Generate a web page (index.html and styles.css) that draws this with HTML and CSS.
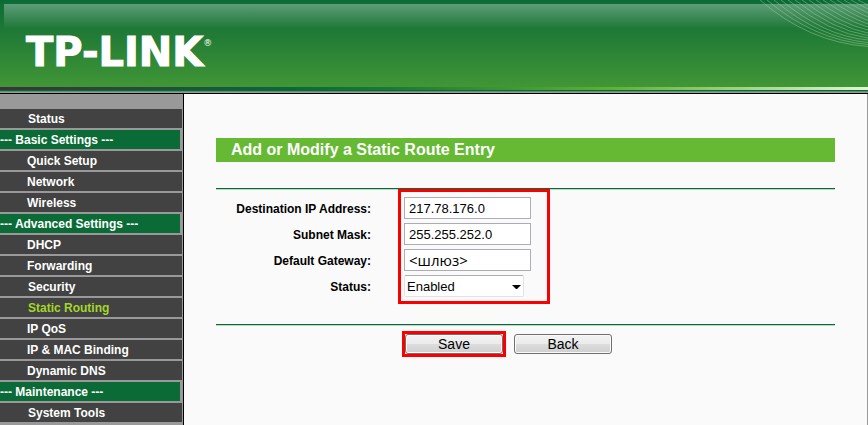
FILE: index.html
```html
<!DOCTYPE html>
<html lang="en">
<head>
<meta charset="utf-8">
<title>TP-LINK - Static Routing</title>
<link rel="stylesheet" href="styles.css">
</head>
<body>
<header class="banner">
  <svg class="waves" width="112" height="48" viewBox="0 0 112 48" aria-hidden="true">
    <path d="M4 0Q52 42 112 46.500"/>
    <path d="M11 0Q58 40 112 44.500"/>
    <path d="M18 0Q63 38 112 42.500"/>
    <path d="M25 0Q68 36 112 40"/>
    <path d="M32 0Q73 33 112 38"/>
    <path d="M39 0Q77 30 112 35.500"/>
    <path d="M46 0Q81 27 112 33"/>
    <path d="M53 0Q85 24 112 30"/>
    <path d="M60 0Q88 20 112 27"/>
    <path d="M67 0Q92 17 112 24"/>
    <path d="M74 0Q95 14 112 20.500"/>
    <path d="M81 0Q98 11 112 17"/>
    <path d="M88 0Q101 8 112 13"/>
    <path d="M95 0Q104 5 112 9"/>
    <path d="M102 0Q108 3 112 5"/>
  </svg>
  <div class="logo">TP-LINK<sup>®</sup></div>
</header>
<div class="strip"></div>
<div class="page">
  <nav class="menu">
    <a class="item inset" href="#">Status</a>
    <a class="item section" href="#">--- Basic Settings ---</a>
    <a class="item" href="#">Quick Setup</a>
    <a class="item" href="#">Network</a>
    <a class="item" href="#">Wireless</a>
    <a class="item section" href="#">--- Advanced Settings ---</a>
    <a class="item" href="#">DHCP</a>
    <a class="item" href="#">Forwarding</a>
    <a class="item inset" href="#">Security</a>
    <a class="item inset active" href="#">Static Routing</a>
    <a class="item" href="#">IP QoS</a>
    <a class="item" href="#">IP &amp; MAC Binding</a>
    <a class="item" href="#">Dynamic DNS</a>
    <a class="item section" href="#">--- Maintenance ---</a>
    <a class="item inset" href="#">System Tools</a>
  </nav>
  <main class="content">
    <h1 class="title">Add or Modify a Static Route Entry</h1>
    <form>
      <div class="fields">
        <label for="dest">Destination IP Address:</label>
        <input class="box" id="dest" type="text" value="217.78.176.0">
        <label for="mask">Subnet Mask:</label>
        <input class="box" id="mask" type="text" value="255.255.252.0">
        <label for="gateway">Default Gateway:</label>
        <input class="box gateway" id="gateway" type="text" value="&lt;шлюз&gt;">
        <label for="status">Status:</label>
        <div class="picker">
          <select id="status"><option>Enabled</option><option>Disabled</option></select>
          <svg width="9" height="4" viewBox="0 0 9 4" aria-hidden="true"><path d="M0 0H9L5 4H4Z"/></svg>
        </div>
        <div class="highlight"></div>
      </div>
      <div class="actions">
        <div class="marked"><button type="button">Save</button></div>
        <button type="button">Back</button>
      </div>
    </form>
  </main>
</div>
</body>
</html>
```
FILE: styles.css
```css
* {
  box-sizing: border-box;
}

body {
  margin: 0;
  min-height: 100vh;
  display: flex;
  flex-direction: column;
  overflow: hidden;
  background: #fafafa;
  color: #000;
  font-family: "Liberation Sans", Arial, sans-serif;
  font-size: 12px;
}

.banner {
  position: relative;
  height: 87px;
  padding: 30px 0 0 26px;
  background: linear-gradient(#0b6b36 0, #0f6d36 4px, #1e7836 29px, #419636 87px);
}

.banner::before {
  content: "";
  position: absolute;
  inset: 4px 0 auto 4px;
  height: 25px;
  background: linear-gradient(rgba(255, 255, 255, 0.33), rgba(255, 255, 255, 0));
}

.waves {
  position: absolute;
  top: 0;
  right: 0;
  fill: none;
  stroke: #b5dcb5;
  stroke-opacity: 0.4;
  stroke-width: 1;
}

.logo {
  position: relative;
  display: flex;
  color: #fff;
  font-family: "DejaVu Sans", sans-serif;
  font-size: 40px;
  font-weight: bold;
  line-height: 44px;
  -webkit-text-stroke: 1px #fff;
}

.logo sup {
  padding-top: 7px;
  font-size: 9px;
  font-weight: normal;
  line-height: 12px;
  -webkit-text-stroke: 0;
}

.strip {
  height: 7px;
  border-bottom: 1px solid #000;
  background:
    linear-gradient(#0b6b36 0 1px, #5c8f73 1px 2px, #999 2px) 0 3px / 100% 3px no-repeat,
    linear-gradient(90deg, #3a3438 0, #0d6638 33%, #1c7836 45%, #5cb130 70%, #e0f5d4 100%);
}

.page {
  flex: 1;
  display: grid;
  grid-template-columns: 184px 1fr;
}

.menu {
  display: flex;
  flex-direction: column;
  gap: 2px;
  padding: 15px 1px 1px 0;
  border-right: 1px solid #000;
  background: #999;
}

.item {
  padding: 2px 0 0 27px;
  background: #424242;
  color: #fff;
  font-weight: bold;
  line-height: 17px;
  text-decoration: none;
}

.inset {
  padding-left: 28px;
}

.section {
  margin-right: 2px;
  padding-left: 0;
  background: #0b6b36;
}

.active {
  color: #a2d729;
}

.content {
  padding: 44px 32px 0;
  border-right: 1px solid #999;
}

.title {
  margin: 0 0 26px;
  padding-left: 15px;
  background: #66b933;
  color: #fff;
  font-size: 16px;
  line-height: 24px;
}

.fields {
  position: relative;
  display: grid;
  grid-template-columns: 155px 1fr;
  grid-auto-rows: 22px;
  gap: 4px 33px;
  align-items: center;
  padding: 8px 0 27px;
  border-top: 1px solid #0b6b36;
  box-shadow: inset 0 1px #b9d6c6;
}

.fields label {
  padding-top: 2px;
  font-weight: bold;
  line-height: 22px;
  text-align: right;
}

.box,
.picker select {
  height: 22px;
  margin: 0;
  border: 1px solid #abadb3;
  background: #fff;
  color: #000;
  font-family: inherit;
  font-size: 13px;
}

.box {
  width: 127px;
  padding: 1px 4px 0;
}

.gateway {
  padding: 0 4px 1px;
  font-family: "Open Sans", "Noto Sans", sans-serif;
  font-size: 15px;
}

.picker {
  position: relative;
  width: 120px;
}

.picker select {
  display: block;
  width: 100%;
  padding: 0 2px;
  border-color: #abadb3 #e2e3ea #e2e3ea;
  border-radius: 2px;
  appearance: none;
}

.picker svg {
  position: absolute;
  top: 10px;
  right: 3px;
}

.highlight {
  position: absolute;
  top: 0;
  left: 182px;
  width: 152px;
  height: 115px;
  border: 3px solid #fa0000;
}

.actions {
  display: flex;
  align-items: center;
  gap: 8px;
  padding: 6px 0 0 186px;
  border-top: 1px solid #0b6b36;
  box-shadow: inset 0 1px #b9d6c6;
}

.actions button {
  display: block;
  width: 98px;
  height: 20px;
  padding: 0;
  border: 1px solid #707070;
  border-radius: 3px;
  background: linear-gradient(#f2f2f2, #ebebeb 50%, #ddd 50%, #cfcfcf);
  box-shadow: inset 0 0 0 1px #fafafa;
  color: #000;
  font-family: inherit;
  font-size: 14px;
  line-height: 18px;
}

.marked {
  border: 3px solid #fa0000;
}
```
